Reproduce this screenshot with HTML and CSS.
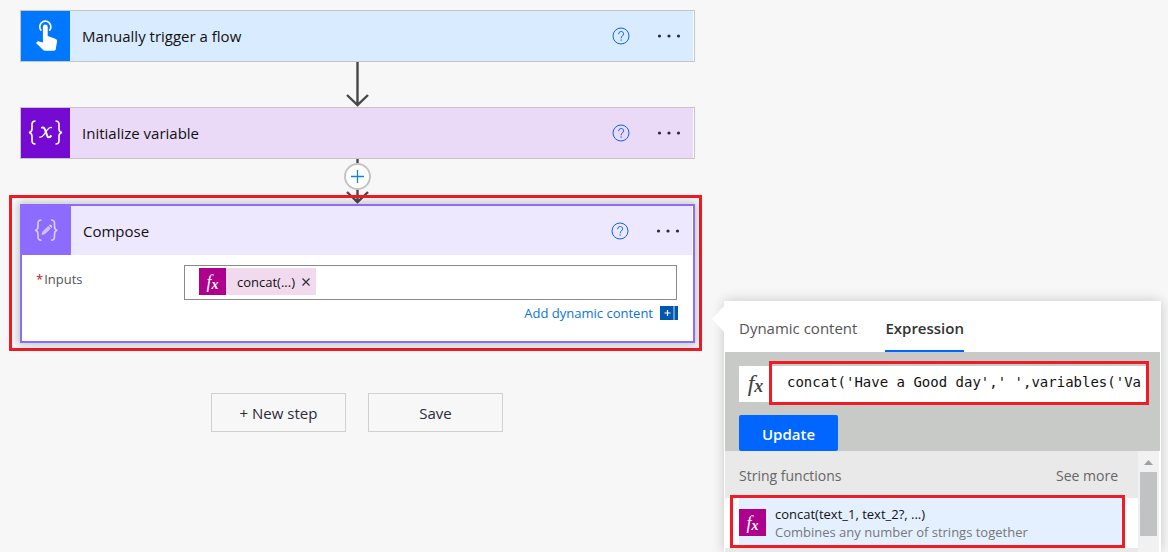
FILE: index.html
```html
<!DOCTYPE html>
<html lang="en">
<head>
  <meta charset="UTF-8" />
  <title>Flow designer</title>
  <meta name="viewport" content="width=device-width, initial-scale=1.0" />
  <link rel="stylesheet" href="styles.css">
</head>
<body>
  <main class="flow">
    <section class="card trigger">
      <header class="card-header">
        <span class="card-icon">
          <svg width="49" height="50" viewBox="0 0 49 50">
            <path d="M20.300 19.700a5.600 5.600 0 1 1 8 0" fill="none" stroke="#fff" stroke-width="1.700"/>
            <path d="M21.900 15.800a2.400 2.400 0 0 1 4.800 0v9.200l7.600 2.800c1.300.5 1.900 1.200 1.700 2.600l-1.200 7.600c-.2 1.100-.7 1.700-1.800 1.700h-8.800c-.8 0-1.400-.2-2-.8L15 32l1.200-1.200c.5-.5 1.100-.6 1.800-.4l3.900 1z" fill="#fff"/>
          </svg>
        </span>
        <h2>Manually trigger a flow</h2>
        <button class="help" type="button" aria-label="Help">
          <svg width="18" height="18" viewBox="0 0 18 18" fill="none" stroke="#0b63f3" stroke-width="1">
            <circle cx="9" cy="9" r="8"/>
            <path d="M6.600 7.200C6.600 3.600 11.600 3.700 11.600 6.800C11.600 8.800 9.100 8.900 9.100 11.300M9.100 12.400v1.400"/>
          </svg>
        </button>
        <button class="more" type="button" aria-label="More">
          <svg width="24" height="4" viewBox="0 0 24 4" fill="#2b2b3a"><circle cx="2.500" cy="2" r="1.600"/><circle cx="12" cy="2" r="1.600"/><circle cx="21.500" cy="2" r="1.600"/></svg>
        </button>
      </header>
    </section>

    <div class="connector">
      <svg width="27" height="45" viewBox="0 0 27 45" fill="none" stroke="#484848" stroke-width="2.400">
        <path d="M13.500 0v43M3 33l10.500 10L24 33"/>
      </svg>
    </div>

    <section class="card variable">
      <header class="card-header">
        <span class="card-icon">
          <svg width="49" height="50" viewBox="0 0 49 50" fill="none" stroke="#fff" stroke-width="1.600">
            <path d="M14.500 13c-2.800 0-3.500 1-3.500 3.300v4.400c0 2.300-.8 3.500-3 3.800 2.200.3 3 1.500 3 3.800v4.400c0 2.300.7 3.300 3.500 3.300"/>
            <path d="M34.500 13c2.800 0 3.500 1 3.500 3.300v4.400c0 2.300.8 3.500 3 3.800-2.200.3-3 1.500-3 3.800v4.400c0 2.300-.7 3.300-3.500 3.300"/>
            <path d="M20.300 20c1.600-.9 3-.5 3.700 1.600l2.200 6.200c.8 2.200 2.600 2.100 4.200-.4" stroke-width="2"/>
            <path d="M31 19.600c-1.900-.8-3.200.2-4.700 2.200l-3.400 4.900c-1.500 2.200-2.800 3-4.600 2.200" stroke-width="1.300"/>
          </svg>
        </span>
        <h2>Initialize variable</h2>
        <button class="help" type="button" aria-label="Help">
          <svg width="18" height="18" viewBox="0 0 18 18" fill="none" stroke="#0b63f3" stroke-width="1">
            <circle cx="9" cy="9" r="8"/>
            <path d="M6.600 7.200C6.600 3.600 11.600 3.700 11.600 6.800C11.600 8.800 9.100 8.900 9.100 11.300M9.100 12.400v1.400"/>
          </svg>
        </button>
        <button class="more" type="button" aria-label="More">
          <svg width="24" height="4" viewBox="0 0 24 4" fill="#2b2b3a"><circle cx="2.500" cy="2" r="1.600"/><circle cx="12" cy="2" r="1.600"/><circle cx="21.500" cy="2" r="1.600"/></svg>
        </button>
      </header>
    </section>

    <div class="connector">
      <svg width="27" height="45" viewBox="0 0 27 45" fill="none" stroke="#484848" stroke-width="2.400">
        <path d="M13.500 0v43M3 33l10.500 10L24 33"/>
      </svg>
      <button class="insert" type="button" aria-label="Insert a new step">
        <svg width="13" height="13" viewBox="0 0 13 13" stroke="#1583dc" stroke-width="1.300"><path d="M6.500 0v13M0 6.500h13"/></svg>
      </button>
    </div>

    <div class="marked marked-card">
      <section class="card compose">
        <header class="card-header">
          <span class="card-icon">
            <svg width="49" height="49" viewBox="0 0 49 49" fill="none" stroke="#d9ceff" stroke-width="1.600">
              <path d="M19.500 14c-2.800 0-3.500 1-3.500 3v3.500c0 2-.7 3.300-2.700 3.800 2 .5 2.700 1.800 2.700 3.800V31c0 2 .7 3.300 3.500 3.300"/>
              <path d="M29 14c2.800 0 3.500 1 3.500 3v3.500c0 2 .7 3.300 2.700 3.800-2 .5-2.700 1.800-2.700 3.800V31c0 2-.7 3.300-3.500 3.300"/>
              <path d="M19.600 29l.7-3.300 6-5.600 2.500 2.500-6 5.700z" fill="#cfc1ff" stroke="none"/>
              <path d="M26.900 19.500l.6-.5c1.500-1 3.400 1 2.400 2.400l-.5.600z" fill="#d9ceff" stroke="none"/>
            </svg>
          </span>
          <h2>Compose</h2>
          <button class="help" type="button" aria-label="Help">
            <svg width="18" height="18" viewBox="0 0 18 18" fill="none" stroke="#0b63f3" stroke-width="1">
              <circle cx="9" cy="9" r="8"/>
              <path d="M6.600 7.200C6.600 3.600 11.600 3.700 11.600 6.800C11.600 8.800 9.100 8.900 9.100 11.300M9.100 12.400v1.400"/>
            </svg>
          </button>
          <button class="more" type="button" aria-label="More">
            <svg width="24" height="4" viewBox="0 0 24 4" fill="#2b2b3a"><circle cx="2.500" cy="2" r="1.600"/><circle cx="12" cy="2" r="1.600"/><circle cx="21.500" cy="2" r="1.600"/></svg>
          </button>
        </header>
        <div class="card-body">
          <label for="inputs"><span class="required">*</span>Inputs</label>
          <div class="field">
            <div class="token-box">
              <span class="token">
                <span class="fx">
                  <i>f<sub>x</sub></i>
                </span>
                <span class="token-text">concat(...)</span>
                <button type="button" aria-label="Remove">
                  <svg width="8" height="8" viewBox="0 0 8 8" stroke="#333" stroke-width="1.300"><path d="M.5.5l7 7M7.500.5l-7 7"/></svg>
                </button>
              </span>
              <input type="text" id="inputs">
            </div>
            <a class="add-dynamic" href="#">Add dynamic content
              <svg width="18" height="14" viewBox="0 0 18 14"><path d="M0 0h18v14H0z" fill="#0058ad"/><path d="M14 0v14" stroke="#c5dcf2"/><path d="M7.500 4v6M4.500 7h6" stroke="#fff" stroke-width="1.200"/></svg>
            </a>
          </div>
        </div>
      </section>
    </div>

    <div class="actions">
      <button type="button">+ New step</button>
      <button type="button">Save</button>
    </div>
  </main>

  <aside class="panel">
    <nav class="tabs">
      <button type="button">Dynamic content</button>
      <button type="button" class="active">Expression</button>
    </nav>

    <form class="editor">
      <div class="expression">
        <label for="expression"><i>f<sub>x</sub></i></label>
        <div class="marked marked-input">
          <input type="text" id="expression" value="concat('Have a Good day',' ',variables('Va">
        </div>
      </div>
      <button type="button" class="update">Update</button>
    </form>

    <div class="functions">
      <div class="list">
        <div class="group">
          <span>String functions</span>
          <a href="#">See more</a>
        </div>
        <div class="marked marked-item">
          <button type="button" class="function">
            <span class="fx"><i>f<sub>x</sub></i></span>
            <span class="function-text">
              <span class="name">concat(text_1, text_2?, ...)</span>
              <span class="description">Combines any number of strings together</span>
            </span>
          </button>
        </div>
        <div class="next-item"></div>
      </div>
      <div class="scrollbar">
        <svg width="9" height="5" viewBox="0 0 9 5"><path d="M0 5l4.500-5L9 5z" fill="#a0a0a0"/></svg>
        <div class="thumb"></div>
      </div>
    </div>
  </aside>
</body>
</html>
```
FILE: styles.css
```css
* { box-sizing: border-box; }

body {
  display: flex;
  height: 100vh;
  margin: 0;
  overflow: hidden;
  font-family: "Open Sans", "Noto Sans", sans-serif;
  font-size: 15px;
  background: #f7f7f7;
  color: #111;
}

button, input { font: inherit; color: inherit; }

button {
  padding: 0;
  border: none;
  background: none;
  cursor: pointer;
}

a { text-decoration: none; }

svg { display: block; flex: none; }

/* red call-out frames */
.marked { border: 3px solid #ee1c25; }

/* flow column */
.flow {
  flex: 1;
  min-width: 0;
  padding: 10px 7px 0 20px;
}

.card {
  border: 1px solid #c5c5c5;
  background: white;
}

.card-header {
  display: flex;
  align-items: center;
  height: 50px;
  margin-right: 1px;
  padding-right: 12px;
}

.card-icon { width: 49px; }

.card h2 {
  flex: 1;
  margin: 0 0 0 12px;
  font-size: 15px;
  font-weight: normal;
}

.help { margin-right: 27px; }

.trigger .card-header { background: #d9ebff; }
.trigger .card-icon { background: #0077ff; }
.variable .card-header { background: #ebdaf7; }
.variable .card-icon { background: #750bd2; }

.connector {
  position: relative;
  display: flex;
  justify-content: center;
  height: 45px;
}

.insert {
  position: absolute;
  top: 4px;
  left: calc(50% - 14px);
  display: flex;
  align-items: center;
  justify-content: center;
  width: 27px;
  height: 27px;
  border: 2px solid #c4c4c4;
  border-radius: 50%;
  background: white;
}

.marked-card {
  position: relative;
  margin: -9px -7px 0 -11px;
  padding: 6px 4px 5px 8px;
}

.compose {
  border: 2px solid #8c6cff;
  box-shadow: 0 0 8px 2px rgba(0, 0, 0, 0.2);
}

.compose .card-header { height: 49px; background: #eee8ff; }
.compose .card-icon { background: #8c6cff; }

.card-body {
  display: flex;
  padding: 10px 16px 19px 14px;
}

.card-body label {
  width: 148px;
  padding-top: 5px;
  font-size: 13px;
  color: #555;
}

.required { margin-right: 1px; color: #c8102e; }

.field { flex: 1; min-width: 0; }

.token-box {
  display: flex;
  align-items: center;
  height: 35px;
  padding: 0 14px 2px;
  border: 1px solid #8a8a8a;
}

.token-box input {
  flex: 1;
  min-width: 0;
  border: none;
  outline: none;
}

.token {
  display: flex;
  align-items: center;
  gap: 7px;
  padding-right: 6px;
  background: #f1daee;
  font-size: 13px;
}

.token-text { margin-left: 4px; }

.fx {
  display: flex;
  align-items: center;
  justify-content: center;
  width: 27px;
  height: 27px;
  background: #ad008c;
  color: white;
  font-family: "Liberation Serif", serif;
  font-size: 18px;
  line-height: 20px;
}

.fx sub, .expression sub {
  font-size: 14px;
  font-weight: bold;
  line-height: 0;
  vertical-align: -1px;
}

.add-dynamic {
  display: flex;
  align-items: center;
  justify-content: flex-end;
  gap: 7px;
  margin-right: -1px;
  padding-top: 4px;
  font-size: 13px;
  line-height: 18px;
  color: #0b72e0;
}

.actions {
  display: flex;
  justify-content: center;
  gap: 22px;
  margin-top: 42px;
  padding-right: 1px;
}

.actions button {
  width: 135px;
  height: 39px;
  border: 1px solid #d0d0d0;
  color: #2b2b3a;
}

/* expression panel */
.panel {
  position: relative;
  display: flex;
  flex-direction: column;
  width: 437px;
  margin: 301px 7px 0 22px;
  padding: 0 1px;
  background: white;
  box-shadow: 0 0 12px rgba(0, 0, 0, 0.2);
}

/* pointer towards the card */
.panel::before {
  content: "";
  position: absolute;
  top: 5px;
  left: -12px;
  width: 12px;
  height: 26px;
  background: white;
  clip-path: polygon(100% 0, 0 50%, 100% 100%);
}

.tabs {
  display: flex;
  gap: 26px;
  height: 51px;
  padding-left: 12px;
}

.tabs button {
  padding: 4px 2px 0;
  border-bottom: 2px solid transparent;
  font-size: 15px;
  color: #555;
}

.tabs .active {
  padding: 4px 0 0;
  border-color: #0066ff;
  font-weight: 600;
  color: #333;
}

.editor {
  height: 99px;
  padding: 9px 11px 0 14px;
  background: #c8cac8;
}

.expression {
  display: flex;
  align-items: flex-end;
  margin-bottom: 10px;
}

.expression label {
  width: 30px;
  height: 39px;
  margin-top: 5px;
  padding-left: 3px;
  border-bottom: 3px solid #c8cac8;
  background: white;
  text-align: center;
  font-family: "Liberation Serif", serif;
  font-size: 24px;
  line-height: 34px;
  color: #444;
}

.expression sub { font-size: 18px; }

.marked-input {
  flex: 1;
  min-width: 0;
  height: 44px;
  padding-top: 2px;
}

.marked-input input {
  display: block;
  width: 100%;
  height: 36px;
  padding: 0 0 4px 15px;
  border: none;
  outline: none;
  background: white;
  font-family: "DejaVu Sans Mono", monospace;
  font-size: 14px;
}

.update {
  width: 99px;
  height: 36px;
  padding-top: 2px;
  border-radius: 2px;
  background: #0066ff;
  color: white;
  font-weight: 600;
}

.functions {
  display: flex;
  flex: 1;
  min-height: 0;
  margin-right: 1px;
}

.list {
  flex: 1;
  min-width: 0;
}

.group {
  display: flex;
  align-items: center;
  justify-content: space-between;
  height: 47px;
  padding: 2px 20px 0 14px;
  background: #e9e9e9;
  font-size: 14px;
  color: #666;
}

.group a { color: inherit; }

.marked-item {
  position: relative;
  margin: -3px 13px 0 5px;
  padding-left: 6px;
}

.function {
  display: flex;
  align-items: center;
  gap: 9px;
  width: 100%;
  height: 47px;
  padding-top: 2px;
  background: #e4f0ff;
  text-align: left;
  font-size: 13px;
  line-height: 18px;
}

.function-text { display: flex; flex-direction: column; }

.name { color: #111; }
.description { color: #777; }

.next-item { height: 4px; background: #e9e9e9; }

.scrollbar {
  display: flex;
  flex-direction: column;
  align-items: center;
  gap: 7px;
  width: 21px;
  padding-top: 9px;
  background: #f1f1f1;
}

.thumb {
  width: 17px;
  height: 64px;
  background: #c1c2c4;
}
```
